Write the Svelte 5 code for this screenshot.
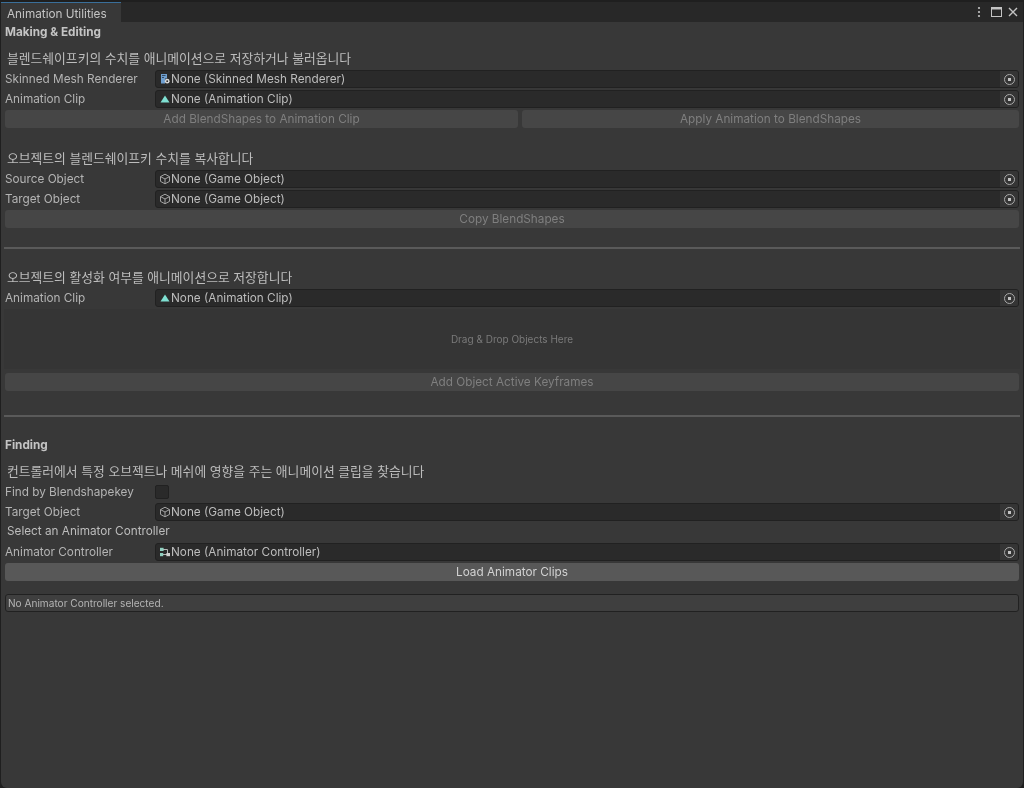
<script>
  const sections = {
    blend: [
      { label: "Skinned Mesh Renderer", value: "None (Skinned Mesh Renderer)", icon: "mesh" },
      { label: "Animation Clip", value: "None (Animation Clip)", icon: "clip" }
    ],
    copy: [
      { label: "Source Object", value: "None (Game Object)", icon: "cube" },
      { label: "Target Object", value: "None (Game Object)", icon: "cube" }
    ]
  };
</script>

{#snippet fieldIcon(kind)}
  <svg class="ficon" viewBox="0 0 12 12" width="12" height="12">
    {#if kind === "cube"}
      <path d="M6 1.2 10.5 3.6V8.4L6 10.8 1.5 8.4V3.6Z M1.5 3.6 6 6l4.5-2.4 M6 6v4.8" fill="none" stroke="#a4a4a4" stroke-width="1" />
    {:else if kind === "clip"}
      <path d="M6 2.5 10.5 9.5H1.5Z" fill="#7fe0d2" />
    {:else if kind === "mesh"}
      <path d="M2 1H8V5.5H6V10.5H2Z" fill="#6f9fd0" />
      <path d="M3 2.5H6.5M3 4.5H5" stroke="#28384a" stroke-width="0.8" />
      <circle cx="8.2" cy="8.2" r="2.4" fill="#d8d8d8" />
      <circle cx="8.2" cy="8.2" r="0.9" fill="#2a2a2a" />
    {:else}
      <path d="M3 3.5H8.5V8.5H3" fill="none" stroke="#b8b8b8" stroke-width="1" />
      <rect x="1" y="1.8" width="3.6" height="3.2" fill="#8fd0c0" />
      <rect x="7.4" y="7" width="3.6" height="3.2" fill="#d0d0d0" />
      <rect x="1" y="7" width="3.2" height="3.2" fill="#8fd0c0" />
    {/if}
  </svg>
{/snippet}

{#snippet field(row)}
  <div class="row">
    <span class="label">{row.label}</span>
    <div class="field">
      {@render fieldIcon(row.icon)}
      <span class="value">{row.value}</span>
      <span class="picker"><i></i></span>
    </div>
  </div>
{/snippet}

<div class="window">
  <div class="tabbar">
    <div class="tab">Animation Utilities</div>
    <div class="winbtns">
      <svg viewBox="0 0 4 12" width="4" height="12"><circle cx="2" cy="2" r="1.1" fill="#c4c4c4" /><circle cx="2" cy="6" r="1.1" fill="#c4c4c4" /><circle cx="2" cy="10" r="1.1" fill="#c4c4c4" /></svg>
      <svg class="maxi" viewBox="0 0 11 10" width="11" height="10"><rect x="0.5" y="0.5" width="10" height="9" fill="none" stroke="#c4c4c4" /><rect x="0" y="0" width="11" height="2.5" fill="#c4c4c4" /></svg>
      <svg viewBox="0 0 10 10" width="10" height="10"><path d="M1 1 9 9M9 1 1 9" stroke="#c4c4c4" stroke-width="1.4" /></svg>
    </div>
  </div>

  <div class="content">
    <h2 class="head first">Making &amp; Editing</h2>

    <p class="note n1">블렌드쉐이프키의 수치를 애니메이션으로 저장하거나 불러옵니다</p>
    {#each sections.blend as row}
      {@render field(row)}
    {/each}
    <div class="split">
      <button class="btn wide" disabled>Add BlendShapes to Animation Clip</button>
      <button class="btn narrow" disabled>Apply Animation to BlendShapes</button>
    </div>

    <p class="note n2">오브젝트의 블렌드쉐이프키 수치를 복사합니다</p>
    {#each sections.copy as row}
      {@render field(row)}
    {/each}
    <button class="btn" disabled>Copy BlendShapes</button>

    <hr class="rule r1" />

    <p class="note n3">오브젝트의 활성화 여부를 애니메이션으로 저장합니다</p>
    {@render field({ label: "Animation Clip", value: "None (Animation Clip)", icon: "clip" })}
    <div class="drop">Drag &amp; Drop Objects Here</div>
    <button class="btn" disabled>Add Object Active Keyframes</button>

    <hr class="rule r2" />

    <h2 class="head finding">Finding</h2>
    <p class="note n4">컨트롤러에서 특정 오브젝트나 메쉬에 영향을 주는 애니메이션 클립을 찾습니다</p>
    <div class="row">
      <span class="label">Find by Blendshapekey</span>
      <span class="check"></span>
    </div>
    {@render field({ label: "Target Object", value: "None (Game Object)", icon: "cube" })}
    <p class="note n5">Select an Animator Controller</p>
    {@render field({ label: "Animator Controller", value: "None (Animator Controller)", icon: "anim" })}
    <button class="btn active">Load Animator Clips</button>

    <div class="help">No Animator Controller selected.</div>
  </div>
</div>

<style>
  :global(body) {
    margin: 0;
    background: #1f1f1f;
  }

  .window {
    width: 1024px;
    height: 788px;
    box-sizing: border-box;
    padding-top: 2px;
    background: #1f1f1f;
    font-family: Inter, "Noto Sans CJK KR", sans-serif;
    font-size: 11.75px;
    color: #bdbdbd;
    overflow: hidden;
    display: flex;
    flex-direction: column;
    filter: blur(0.35px);
  }

  .tabbar {
    height: 20px;
    flex: none;
    margin: 0 1px;
    background: #282828;
    display: flex;
    justify-content: space-between;
    align-items: center;
  }

  .tab {
    width: 120px;
    height: 20px;
    box-sizing: border-box;
    background: #383838;
    border-top: 1px solid #3a6f9a;
    padding: 2px 0 0 6px;
    line-height: 19px;
    color: #c4c4c4;
  }

  .winbtns {
    display: flex;
    align-items: center;
    gap: 8px;
    padding: 0 5px 0 0;
  }

  .maxi {
    margin: 0 -2px 0 2px;
  }

  .content {
    flex: 1;
    margin: 0 1px;
    background: #383838;
    border-radius: 0 0 6px 6px;
    padding: 0 4px 0 4px;
    display: flex;
    flex-direction: column;
  }

  .head {
    margin: 0;
    font-size: 11.75px;
    font-weight: 700;
    line-height: 18px;
    color: #c4c4c4;
  }

  .first { margin-top: 1px; }
  .finding { margin-top: 19px; }

  .note {
    margin: 0;
    padding-left: 2px;
    font-size: 12.8px;
    line-height: 18px;
    padding-bottom: 1px;
    color: #bdbdbd;
  }

  .n1 { margin-top: 9px; }
  .n2 { margin-top: 22px; }
  .n3 { margin-top: 20px; }
  .n4 { margin-top: 9px; }
  .n5 { font-size: 11.75px; line-height: 19px; }

  .row {
    height: 20px;
    flex: none;
    display: flex;
    align-items: center;
  }

  .label {
    width: 150px;
    flex: none;
    color: #b4b4b4;
  }

  .field {
    flex: 1;
    height: 18px;
    box-sizing: border-box;
    background: #2a2a2a;
    border: 1px solid #212121;
    border-radius: 3px;
    display: flex;
    align-items: center;
    padding-left: 3px;
    color: #bdbdbd;
  }

  .ficon {
    flex: none;
  }

  .value {
    flex: 1;
  }

  .picker {
    width: 18px;
    height: 16px;
    background: #353535;
    border-radius: 0 2px 2px 0;
    display: flex;
    align-items: center;
    justify-content: center;
  }

  .picker i {
    width: 11px;
    height: 11px;
    box-sizing: border-box;
    border: 1px solid #aaaaaa;
    border-radius: 50%;
    background: radial-gradient(circle, #c4c4c4 0 1.5px, transparent 2px);
  }

  .check {
    width: 14px;
    height: 14px;
    box-sizing: border-box;
    background: #2a2a2a;
    border: 1px solid #212121;
    border-radius: 2px;
  }

  .btn {
    height: 18px;
    flex: none;
    width: 100%;
    padding: 0;
    font: inherit;
    border: 0;
    border-radius: 3px;
    background: #464646;
    color: #7f7f7f;
    display: block;
    margin-top: 1px;
  }

  .btn.active {
    background: #585858;
    color: #d2d2d2;
  }

  .split {
    display: flex;
    gap: 4px;
  }

  .split .btn {
    width: auto;
    min-width: 0;
  }

  .split .wide { flex: 513 1 0; }
  .split .narrow { flex: 497 1 0; }

  .rule {
    height: 2px;
    border: 0;
    margin: 0 -1px;
    background: #5a5a5a;
  }

  .r1 { margin-top: 19px; }
  .r2 { margin-top: 24px; }

  .drop {
    height: 60px;
    flex: none;
    margin: 1px -1px 3px;
    background: #353535;
    display: flex;
    align-items: center;
    justify-content: center;
    font-size: 10px;
    color: #7a7a7a;
  }

  .help {
    height: 18px;
    flex: none;
    box-sizing: border-box;
    margin-top: 13px;
    background: #3f3f3f;
    border: 1px solid #212121;
    border-radius: 3px;
    font-size: 10.1px;
    line-height: 16px;
    padding-left: 2px;
    color: #b4b4b4;
  }
</style>
